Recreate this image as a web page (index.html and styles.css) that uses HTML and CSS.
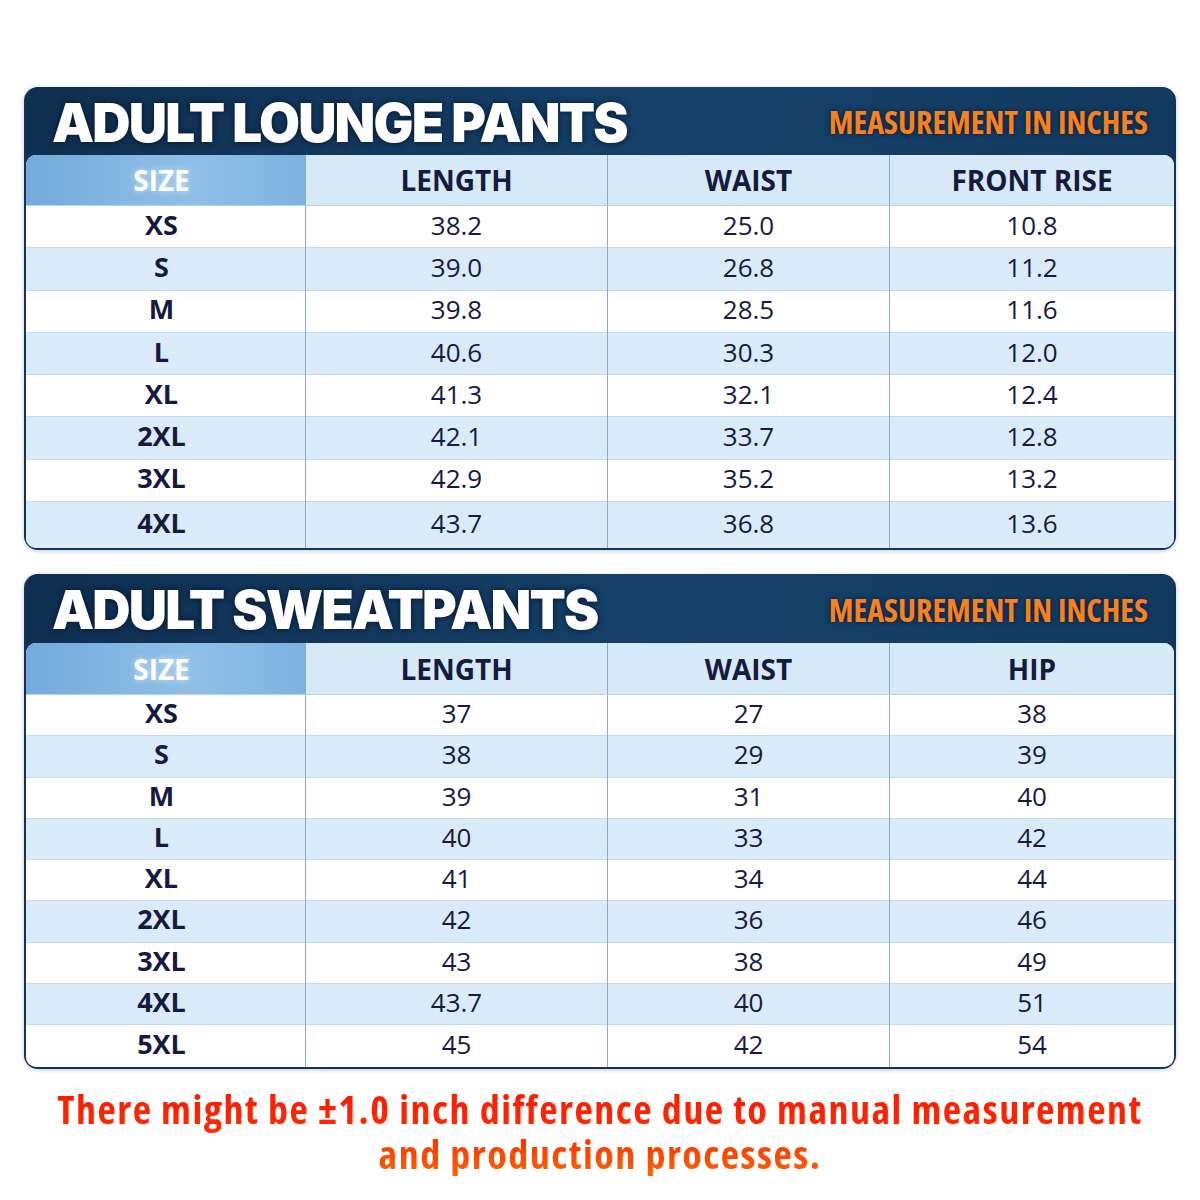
FILE: index.html
```html
<!DOCTYPE html>
<html lang="en">
<head>
    <meta charset="UTF-8">
    <meta name="viewport" content="width=device-width, initial-scale=1.0">
    <title>Size Chart</title>
    <link rel="stylesheet" href="styles.css">
</head>
<body>
    <div class="page">
        <section class="chart">
            <div class="chart-head">
                <h2 class="chart-title">ADULT LOUNGE PANTS</h2>
                <span class="chart-unit">MEASUREMENT IN INCHES</span>
            </div>
            <div class="table-wrap">
                <table class="sizes">
                    <thead>
                        <tr><th class="size-col">SIZE</th><th>LENGTH</th><th>WAIST</th><th>FRONT RISE</th></tr>
                    </thead>
                    <tbody>
                        <tr><td class="size-col">XS</td><td>38.2</td><td>25.0</td><td>10.8</td></tr>
                        <tr><td class="size-col">S</td><td>39.0</td><td>26.8</td><td>11.2</td></tr>
                        <tr><td class="size-col">M</td><td>39.8</td><td>28.5</td><td>11.6</td></tr>
                        <tr><td class="size-col">L</td><td>40.6</td><td>30.3</td><td>12.0</td></tr>
                        <tr><td class="size-col">XL</td><td>41.3</td><td>32.1</td><td>12.4</td></tr>
                        <tr><td class="size-col">2XL</td><td>42.1</td><td>33.7</td><td>12.8</td></tr>
                        <tr><td class="size-col">3XL</td><td>42.9</td><td>35.2</td><td>13.2</td></tr>
                        <tr><td class="size-col">4XL</td><td>43.7</td><td>36.8</td><td>13.6</td></tr>
                    </tbody>
                </table>
            </div>
        </section>

        <section class="chart chart-tight">
            <div class="chart-head">
                <h2 class="chart-title">ADULT SWEATPANTS</h2>
                <span class="chart-unit">MEASUREMENT IN INCHES</span>
            </div>
            <div class="table-wrap">
                <table class="sizes">
                    <thead>
                        <tr><th class="size-col">SIZE</th><th>LENGTH</th><th>WAIST</th><th>HIP</th></tr>
                    </thead>
                    <tbody>
                        <tr><td class="size-col">XS</td><td>37</td><td>27</td><td>38</td></tr>
                        <tr><td class="size-col">S</td><td>38</td><td>29</td><td>39</td></tr>
                        <tr><td class="size-col">M</td><td>39</td><td>31</td><td>40</td></tr>
                        <tr><td class="size-col">L</td><td>40</td><td>33</td><td>42</td></tr>
                        <tr><td class="size-col">XL</td><td>41</td><td>34</td><td>44</td></tr>
                        <tr><td class="size-col">2XL</td><td>42</td><td>36</td><td>46</td></tr>
                        <tr><td class="size-col">3XL</td><td>43</td><td>38</td><td>49</td></tr>
                        <tr><td class="size-col">4XL</td><td>43.7</td><td>40</td><td>51</td></tr>
                        <tr><td class="size-col">5XL</td><td>45</td><td>42</td><td>54</td></tr>
                    </tbody>
                </table>
            </div>
        </section>

        <p class="note">There might be ±1.0 inch difference due to manual measurement<br>and production processes.</p>
    </div>
</body>
</html>
```

FILE: styles.css
```css
body {
    margin: 0;
    padding: 0;
    background-color: #fff;
    font-family: "Open Sans", Arial, sans-serif;
    color: #161a3f;
}

.page {
    padding: 87px 24px 0;
}

.chart {
    background: #113457;
    border-radius: 14px;
    padding: 0 2px 2px;
    box-shadow: 0 1px 4px rgba(17, 52, 87, 0.25);
}

.chart + .chart {
    margin-top: 24px;
}

.chart-head {
    height: 68px;
    display: flex;
    justify-content: space-between;
    align-items: center;
    padding: 0 26px 0 26px;
    background: linear-gradient(90deg, #0f2f50, #15416a 55%, #123a60);
    border-radius: 14px 14px 0 0;
}

.chart-title {
    margin: 4px 0 0;
    color: #fff;
    font-family: Inter, "Open Sans", sans-serif;
    font-weight: 900;
    font-size: 53px;
    letter-spacing: -1.8px;
    line-height: 1;
    text-shadow: 0 0 6px rgba(0, 10, 30, 0.8);
}

.chart-unit {
    color: #f7801f;
    font-weight: 700;
    font-size: 32px;
    font-stretch: 75%;
    line-height: 1;
    margin-top: 2px;
    text-shadow: 0 0 5px rgba(0, 10, 30, 0.7);
}

.table-wrap {
    background: #fff;
    border-radius: 10px;
    overflow: hidden;
}

.sizes {
    width: 100%;
    border-collapse: collapse;
    table-layout: fixed;
}

.sizes th,
.sizes td {
    text-align: center;
    padding: 0;
    border-left: 1px solid #8ea9c6;
}

.sizes th:first-child,
.sizes td:first-child {
    border-left: none;
    padding-right: 8px;
}

.sizes th {
    height: 50px;
    font-size: 28px;
    font-weight: 700;
    background: #d5e9f7;
    border-bottom: 1px solid #b7d3ec;
}

.sizes th:nth-child(1) { width: 271px; }
.sizes th:nth-child(2) { width: 301px; }
.sizes th:nth-child(3) { width: 281px; }

.sizes th.size-col {
    background: linear-gradient(90deg, #74abdc, #8fbfe6 60%, #7db3e0);
    color: #fff;
    text-shadow: 0 0 6px rgba(255, 255, 255, 0.6);
}

.sizes td {
    height: 37.3px;
    padding-bottom: 4px;
    font-size: 26px;
    line-height: 30px;
    border-top: 1px solid #c3dcf0;
}

.sizes tbody tr:last-child td {
    height: 41px;
    padding-bottom: 5px;
}

.sizes tbody tr:nth-child(even) td {
    background: #d9ebf8;
}

.sizes td.size-col {
    font-weight: 700;
    font-size: 27px;
}

.chart-tight .chart-head {
    height: 69px;
}

.chart-tight .sizes th {
    height: 51px;
}

.chart-tight .sizes td {
    height: 36.25px;
}

.chart-tight .sizes tbody tr:last-child td {
    height: 37px;
}

.note {
    margin: 17px 0 0;
    text-align: center;
    font-weight: 700;
    font-size: 40px;
    font-stretch: 87.5%;
    letter-spacing: 1.5px;
    line-height: 45px;
    background: linear-gradient(180deg, #ff1800, #ff2a00 50%, #ff6200);
    -webkit-background-clip: text;
    background-clip: text;
    color: transparent;
}
```
